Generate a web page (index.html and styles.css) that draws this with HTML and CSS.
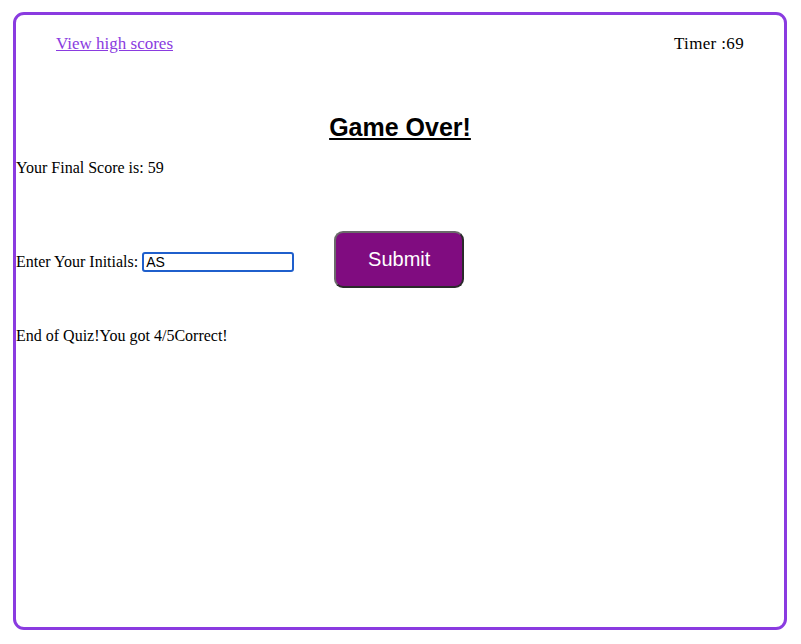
FILE: index.html
```html
<!DOCTYPE html>
<html>
<head>
<meta charset="utf-8">
<link rel="stylesheet" href="styles.css">
</head>
<body>
<div class="frame">
  <header class="top">
    <a class="scores-link" href="#">View high scores</a>
    <span class="timer">Timer :69</span>
  </header>
  <h2 class="title">Game Over!</h2>
  <p class="final">Your Final Score is: 59</p>
  <div class="entry">
    <label class="initials">Enter Your Initials: <input class="initials-input" type="text" value="AS"></label>
    <button class="submit">Submit</button>
  </div>
  <p class="result">End of Quiz!You got 4/5Correct!</p>
</div>
</body>
</html>
```
FILE: styles.css
```css
html, body {
  margin: 0;
  padding: 0;
  background: #ffffff;
}
body {
  font-family: "Liberation Serif", "Times New Roman", serif;
  font-size: 16px;
  color: #000;
}
.frame {
  box-sizing: border-box;
  margin: 12px 14px 0 13px;
  height: 618px;
  border: 3px solid #8a3be0;
  border-radius: 11px;
}
.top {
  height: 58px;
  padding: 0 40px;
  display: flex;
  align-items: center;
  justify-content: space-between;
  font-size: 17px;
}
.scores-link {
  color: #8a3be0;
  text-decoration: underline;
}
.timer {
  color: #000;
  letter-spacing: 0.35px;
}
.title {
  margin: 40px 0 0;
  text-align: center;
  font-family: "Liberation Sans", Arial, sans-serif;
  font-weight: bold;
  font-size: 25px;
  line-height: 28px;
  text-decoration: underline;
}
.final {
  margin: 18px 0 0;
  line-height: 18px;
}
.entry {
  margin-top: 54px;
  display: flex;
  align-items: center;
  gap: 40px;
}
.initials {
  display: flex;
  align-items: center;
  gap: 4px;
  margin-top: 4px;
  line-height: 18px;
}
.initials-input {
  box-sizing: border-box;
  width: 152px;
  height: 20px;
  margin: 0;
  padding: 0 2px;
  border: 2px solid #1f5fcc;
  border-radius: 3px;
  font-family: "Liberation Sans", Arial, sans-serif;
  font-size: 14px;
  color: #000;
  outline: none;
}
.submit {
  box-sizing: border-box;
  width: 130px;
  height: 57px;
  background: #800c80;
  color: #fff;
  border: 2px solid;
  border-color: #6b6b6b #2a2a2a #2a2a2a #6b6b6b;
  border-radius: 9px;
  font-family: "Liberation Sans", Arial, sans-serif;
  font-size: 20px;
  padding: 0;
}
.result {
  margin: 39px 0 0;
  line-height: 18px;
}
```
